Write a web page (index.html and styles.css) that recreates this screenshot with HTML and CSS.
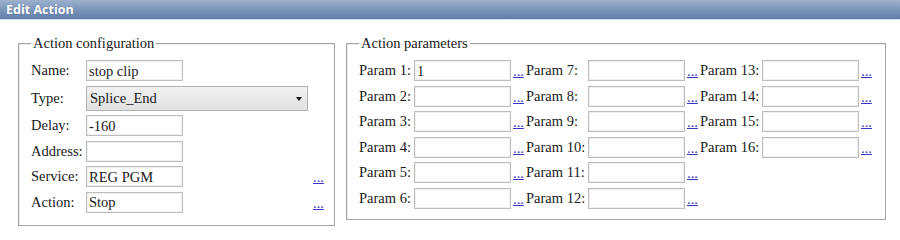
FILE: index.html
```html
<!DOCTYPE html>
<html>
<head>
<meta charset="utf-8">
<link rel="stylesheet" href="styles.css">
</head>
<body>
<div class="header">Edit Action</div>
<div class="content">
  <fieldset class="box box-config">
    <legend>Action configuration</legend>
    <div class="config-grid">
      <label class="lbl">Name:</label>
      <input class="txt" type="text" value="stop clip">
      <span></span>

      <label class="lbl">Type:</label>
      <span class="select-wrap"><select class="sel"><option>Splice_End</option></select></span>
      <span></span>

      <label class="lbl">Delay:</label>
      <input class="txt" type="text" value="-160">
      <span></span>

      <label class="lbl">Address:</label>
      <input class="txt" type="text" value="">
      <span></span>

      <label class="lbl">Service:</label>
      <input class="txt" type="text" value="REG PGM">
      <a class="more" href="#">...</a>

      <label class="lbl">Action:</label>
      <input class="txt" type="text" value="Stop">
      <a class="more" href="#">...</a>
    </div>
  </fieldset>

  <fieldset class="box box-params">
    <legend>Action parameters</legend>
    <div class="param-grid">
      <label class="lbl">Param 1:</label><input class="txt" type="text" value="1"><a class="more" href="#">...</a>
      <label class="lbl">Param 7:</label><input class="txt" type="text"><a class="more" href="#">...</a>
      <label class="lbl">Param 13:</label><input class="txt" type="text"><a class="more" href="#">...</a>

      <label class="lbl">Param 2:</label><input class="txt" type="text"><a class="more" href="#">...</a>
      <label class="lbl">Param 8:</label><input class="txt" type="text"><a class="more" href="#">...</a>
      <label class="lbl">Param 14:</label><input class="txt" type="text"><a class="more" href="#">...</a>

      <label class="lbl">Param 3:</label><input class="txt" type="text"><a class="more" href="#">...</a>
      <label class="lbl">Param 9:</label><input class="txt" type="text"><a class="more" href="#">...</a>
      <label class="lbl">Param 15:</label><input class="txt" type="text"><a class="more" href="#">...</a>

      <label class="lbl">Param 4:</label><input class="txt" type="text"><a class="more" href="#">...</a>
      <label class="lbl">Param 10:</label><input class="txt" type="text"><a class="more" href="#">...</a>
      <label class="lbl">Param 16:</label><input class="txt" type="text"><a class="more" href="#">...</a>

      <label class="lbl">Param 5:</label><input class="txt" type="text"><a class="more" href="#">...</a>
      <label class="lbl">Param 11:</label><input class="txt" type="text"><a class="more" href="#">...</a>
      <span></span><span></span><span></span>

      <label class="lbl">Param 6:</label><input class="txt" type="text"><a class="more" href="#">...</a>
      <label class="lbl">Param 12:</label><input class="txt" type="text"><a class="more" href="#">...</a>
      <span></span><span></span><span></span>
    </div>
  </fieldset>
</div>
</body>
</html>
```

FILE: styles.css
```css
html, body {
  margin: 0;
  padding: 0;
  background: #ffffff;
}

body {
  width: 900px;
  height: 230px;
  overflow: hidden;
  font-family: "Liberation Serif", "Times New Roman", serif;
  font-size: 14.5px;
  color: #1a1a1a;
}

.header {
  height: 19px;
  line-height: 19px;
  padding-left: 6px;
  background: linear-gradient(to bottom, #9cb1cd 0%, #7f98bd 45%, #5f7ca8 100%);
  border-bottom: 1px solid #d8e0ea;
  color: #ffffff;
  font-family: "Open Sans", "DejaVu Sans", sans-serif;
  font-weight: 700;
  font-size: 12.5px;
  text-shadow: 0 0 1px rgba(40, 60, 100, 0.4);
}

.content {
  display: flex;
  align-items: flex-start;
  gap: 11px;
  padding: 15px 0 0 18px;
}

.box {
  margin: 0;
  border: 1px solid #a3a3a3;
  box-shadow: inset 1px 1px 0 #ececec;
  min-width: 0;
}

.box legend {
  padding: 0 2px;
  font-size: 14.5px;
  line-height: 17px;
  color: #1a1a1a;
}

.box-config {
  padding: 8px 11px 12px 12px;
}

.box-params {
  padding: 8px 10px 10px 12px;
}

.config-grid {
  display: grid;
  grid-template-columns: 55px 225px 12px;
  grid-auto-rows: auto;
  row-gap: 4.5px;
  align-items: center;
}

.param-grid {
  display: grid;
  grid-template-columns: 55px 97px 15px 62px 97px 15px 62px 97px 16px;
  row-gap: 4.6px;
  align-items: center;
}

.lbl {
  white-space: nowrap;
  line-height: 17px;
}

.txt {
  box-sizing: border-box;
  width: 97px;
  height: 21px;
  margin: 0;
  padding: 1px 2px 0 2px;
  border: 1px solid #bdbdbd;
  box-shadow: inset 0 0 0 1px #f0f0f0;
  border-radius: 0;
  background: #ffffff;
  font-family: "Liberation Serif", "Times New Roman", serif;
  font-size: 14.5px;
  color: #1a1a1a;
  outline: none;
}

.select-wrap {
  position: relative;
  display: block;
  width: 222px;
  height: 25px;
}

.select-wrap::after {
  content: "";
  position: absolute;
  right: 6px;
  top: 11px;
  border-left: 3.5px solid transparent;
  border-right: 3.5px solid transparent;
  border-top: 4px solid #111111;
  pointer-events: none;
}

.sel {
  -webkit-appearance: none;
  appearance: none;
  box-sizing: border-box;
  width: 222px;
  height: 25px;
  margin: 0;
  padding: 0 0 0 3px;
  border: 1px solid #b0b0b0;
  border-radius: 0;
  background: linear-gradient(to bottom, #f2f2f2, #e2e2e2);
  font-family: "Liberation Serif", "Times New Roman", serif;
  font-size: 14.5px;
  color: #1a1a1a;
  outline: none;
}

.more {
  align-self: end;
  padding-left: 2px;
  padding-bottom: 3px;
  font-size: 14.5px;
  line-height: 14px;
  color: #3535c8;
  text-decoration: underline;
}
```
